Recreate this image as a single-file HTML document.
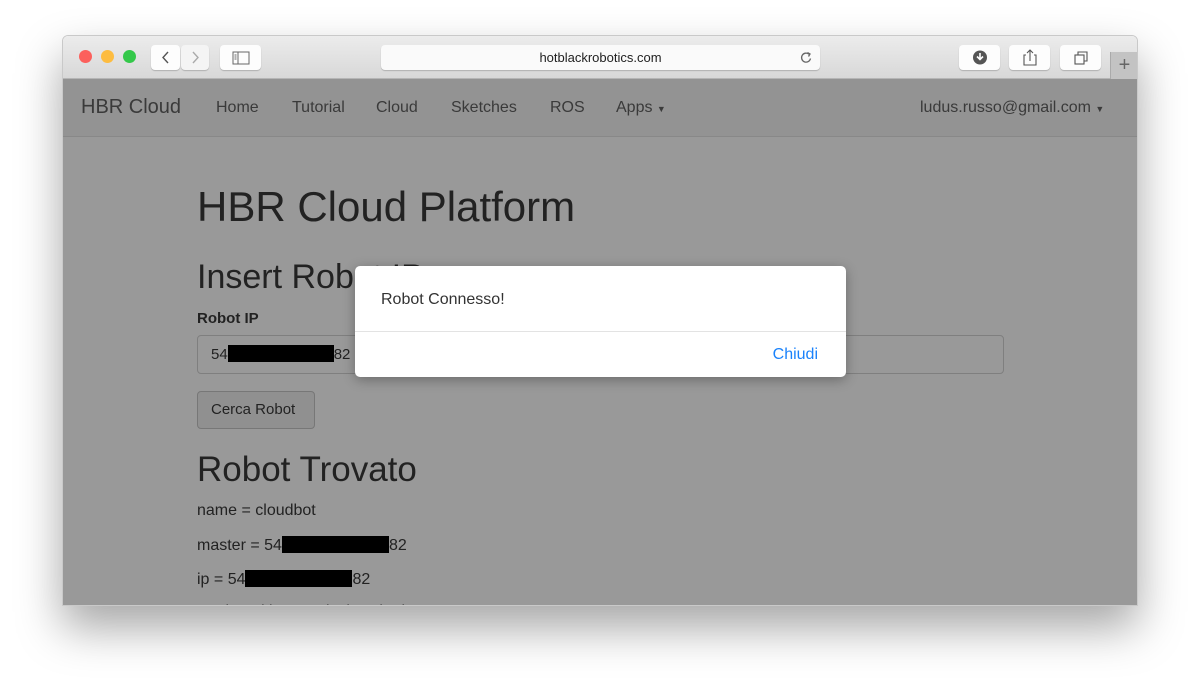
<!DOCTYPE html>
<html><head><meta charset="utf-8">
<style>
*{margin:0;padding:0;box-sizing:border-box}
body{width:1200px;height:696px;background:#fff;position:relative;overflow:hidden;font-family:"Liberation Sans",Arial,sans-serif}
.shadow{position:absolute;left:62px;top:35px;width:1076px;height:571px;border-radius:6px;box-shadow:0 22px 45px rgba(0,0,0,.35)}
.win{position:absolute;left:62px;top:35px;width:1076px;height:571px;border-radius:6px 6px 0 0;overflow:hidden;border:1px solid #c9c9c9}
.toolbar{position:absolute;left:0;top:0;width:100%;height:43px;background:linear-gradient(#ececec,#d8d8d8);border-bottom:1px solid #b5b5b5}
.dot{position:absolute;top:14px;width:13px;height:13px;border-radius:50%}
.btn{position:absolute;top:9px;height:25px;background:#fdfdfd;border-radius:4px;box-shadow:0 1px 1px rgba(0,0,0,.2)}
.url{position:absolute;left:318px;top:9px;width:439px;height:25px;background:#fafafa;border-radius:4px;box-shadow:0 1px 1px rgba(0,0,0,.2);font-size:13px;color:#222;text-align:center;line-height:25px}
.plus{position:absolute;left:1047px;top:16px;width:28px;height:27px;background:#c3c3c3;border-left:1px solid #aaa;color:#666;font-size:20px;text-align:center;line-height:26px}
.page{position:absolute;left:0;top:43px;width:100%;height:528px;background:#999}
.nav{position:absolute;left:0;top:0;width:100%;height:58px;background:#939393;border-bottom:1px solid #888;color:#3a3a3a}
.nav span{position:absolute;top:20px;font-size:16px}
.t{position:absolute;color:#222;white-space:nowrap}
.red{display:inline-block;background:#000;height:17px;vertical-align:-3px}
</style></head><body>
<div class="shadow"></div>
<div class="win">
 <div class="toolbar">
  <div class="dot" style="left:16px;background:#fc605c"></div>
  <div class="dot" style="left:38px;background:#fdbc40"></div>
  <div class="dot" style="left:60px;background:#34c84a"></div>
  <div class="btn" style="left:88px;width:29px"><svg width="29" height="25"><path d="M17 7l-5 5.5 5 5.5" stroke="#555" stroke-width="1.4" fill="none"/></svg></div>
  <div class="btn" style="left:118px;width:28px;background:#f4f4f4"><svg width="28" height="25"><path d="M12 7l5 5.5-5 5.5" stroke="#aaa" stroke-width="1.4" fill="none"/></svg></div>
  <div class="btn" style="left:157px;width:41px"><svg width="41" height="25"><rect x="13" y="7" width="16" height="12" fill="none" stroke="#666"/><line x1="18" y1="7" x2="18" y2="19" stroke="#666"/><path d="M14.5 10h2M14.5 12h2M14.5 14h2" stroke="#666"/></svg></div>
  <div class="url">hotblackrobotics.com<svg style="position:absolute;right:6px;top:5px" width="16" height="16"><path d="M12.5 8.5a4.5 4.5 0 1 1-1.5-4.3" stroke="#666" stroke-width="1.3" fill="none"/><path d="M9.5 2.5l2.5 1.5-1.5 2.5" stroke="#666" stroke-width="1.3" fill="none"/></svg></div>
  <div class="btn" style="left:896px;width:41px"><svg width="41" height="25"><circle cx="21" cy="12.5" r="7" fill="#555"/><path d="M21 8v6M18 11.5l3 3 3-3" stroke="#fff" stroke-width="1.6" fill="none"/></svg></div>
  <div class="btn" style="left:946px;width:41px"><svg width="41" height="25"><path d="M17 10h-2v10h12V10h-2M21 16V5M18 8l3-3 3 3" stroke="#555" stroke-width="1.1" fill="none"/></svg></div>
  <div class="btn" style="left:997px;width:41px"><svg width="41" height="25"><rect x="15" y="10" width="9" height="9" fill="none" stroke="#555" stroke-width="1.1"/><path d="M18 10V7h9v9h-3" stroke="#555" stroke-width="1.1" fill="none"/></svg></div>
  <div class="plus">+</div>
 </div>
 <div class="page">
  <div class="nav">
   <span style="left:18px;top:17px;font-size:20px">HBR Cloud</span>
   <span style="left:153px">Home</span>
   <span style="left:229px">Tutorial</span>
   <span style="left:313px">Cloud</span>
   <span style="left:388px">Sketches</span>
   <span style="left:487px">ROS</span>
   <span style="left:553px">Apps <small style="font-size:9px">▼</small></span>
   <span style="left:857px">ludus.russo@gmail.com <small style="font-size:9px">▼</small></span>
  </div>
  <div class="t" style="left:134px;top:104px;font-size:42px">HBR Cloud Platform</div>
  <div class="t" style="left:134px;top:179px;font-size:34px">Insert Robot IP</div>
  <div class="t" style="left:134px;top:231px;font-size:15px;font-weight:bold">Robot IP</div>
  <div style="position:absolute;left:134px;top:256px;width:807px;height:39px;border:1px solid #7f7f7f;border-radius:4px;background:#999"></div>
  <div class="t" style="left:148px;top:266px;font-size:15px">54<span class="red" style="width:106px"></span>82</div>
  <div style="position:absolute;left:134px;top:312px;width:118px;height:38px;border:1px solid #777;border-radius:4px;background:#909090"></div>
  <div class="t" style="left:148px;top:322px;font-size:15px">Cerca Robot</div>
  <div class="t" style="left:134px;top:371px;font-size:35px">Robot Trovato</div>
  <div class="t" style="left:134px;top:423px;font-size:16px">name = cloudbot</div>
  <div class="t" style="left:134px;top:457px;font-size:16px">master = 54<span class="red" style="width:107px"></span>82</div>
  <div class="t" style="left:134px;top:491px;font-size:16px">ip = 54<span class="red" style="width:107px"></span>82</div>
  <div class="t" style="left:134px;top:524px;font-size:16px">Designed by HotBlack Robotics</div>
 </div>
</div>
<div style="position:absolute;left:355px;top:266px;width:491px;height:111px;background:#fff;border-radius:5px;box-shadow:0 3px 12px rgba(0,0,0,.3)">
 <div style="position:absolute;left:26px;top:25px;font-size:16px;color:#333">Robot Connesso!</div>
 <div style="position:absolute;left:0;top:65px;width:100%;border-top:1px solid #e3e3e3"></div>
 <div style="position:absolute;right:28px;top:80px;font-size:16px;color:#1a82fb">Chiudi</div>
</div>
</body></html>
